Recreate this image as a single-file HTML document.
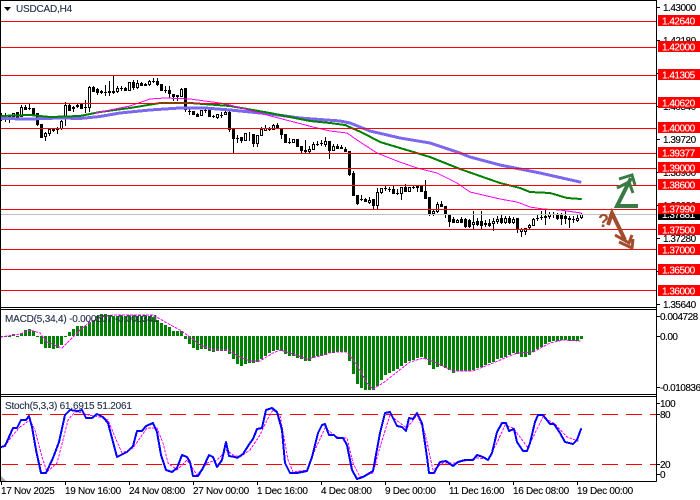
<!DOCTYPE html>
<html><head><meta charset="utf-8"><style>
html,body{margin:0;padding:0;background:#fff;width:700px;height:500px;overflow:hidden}
svg{display:block}
text{font-family:"Liberation Sans",sans-serif;font-size:10px;fill:#000;stroke:#000;stroke-width:.12px}
.a text,.a{letter-spacing:-.5px}
.t text{letter-spacing:-.3px}
.w text{fill:#fff;stroke:#fff;letter-spacing:-.5px}
.c{shape-rendering:crispEdges}
polyline{fill:none;stroke-linejoin:round;stroke-linecap:round}
</style></head><body>
<svg width="700" height="500" viewBox="0 0 700 500" xmlns="http://www.w3.org/2000/svg">
<rect width="700" height="500" fill="#fff"/>

<!-- candles -->
<path class="c" stroke="#000" stroke-width="1" fill="none" d="M1.5 113V121M5.5 113V122M9.5 115V123M13.5 113V118M17.5 112V118M21.5 105V117M25.5 105V110M29.5 104V110M33.5 108V115M37.5 113V126M41.5 124V138M45.5 132V141M49.5 129V136M53.5 129V132M57.5 127V134M61.5 120V130M65.5 102V126M69.5 104V111M73.5 106V112M77.5 104V108M81.5 104V109M85.5 100V113M89.5 86V112M93.5 86V92M97.5 88V95M101.5 90V94M105.5 85V96M109.5 81V96M113.5 76V94M117.5 86V93M121.5 86V91M125.5 87V91M129.5 82V91M133.5 80V90M137.5 80V89M141.5 82V86M145.5 83V86M149.5 80V86M153.5 78V83M157.5 78V86M161.5 84V91M165.5 86V93M169.5 86V98M173.5 94V101M177.5 95V101M181.5 88V97M185.5 88V112M189.5 108V115M193.5 111V115M197.5 113V117M201.5 110V116M205.5 107V113M209.5 110V117M213.5 115V118M217.5 114V119M221.5 112V118M225.5 111V115M229.5 111V132M233.5 129V153M237.5 135V143M241.5 137V143M245.5 133V141M249.5 132V141M253.5 134V147M257.5 135V147M261.5 127V136M265.5 125V131M269.5 127V131M273.5 124V130M277.5 123V129M281.5 129V139M285.5 134V143M289.5 138V144M293.5 139V143M297.5 139V147M301.5 146V153M305.5 140V153M309.5 146V153M313.5 142V150M317.5 141V146M321.5 140V146M325.5 137V147M329.5 141V159M333.5 144V151M337.5 144V149M341.5 145V149M345.5 147V152M349.5 151V176M353.5 171V196M357.5 195V205M361.5 195V201M365.5 198V202M369.5 197V204M373.5 199V209M377.5 188V209M381.5 188V194M385.5 186V191M389.5 187V192M393.5 186V194M397.5 189V195M401.5 187V200M405.5 184V192M409.5 187V192M413.5 185V189M417.5 186V192M421.5 185V192M425.5 180V199M429.5 197V216M433.5 210V216M437.5 202V213M441.5 201V207M445.5 206V218M449.5 214V227M453.5 217V223M457.5 219V223M461.5 217V223M465.5 218V228M469.5 219V228M473.5 211V229M477.5 218V226M481.5 211V229M485.5 220V227M489.5 219V227M493.5 218V231M497.5 216V224M501.5 214V224M505.5 216V224M509.5 216V224M513.5 217V224M517.5 218V233M521.5 228V237M525.5 228V235M529.5 224V230M533.5 218V226M537.5 215V221M541.5 211V220M545.5 210V225M549.5 212V219M553.5 212V218M557.5 213V220M561.5 213V225M565.5 211V224M569.5 216V228M573.5 216V223M577.5 215V222M581.5 213V219"/>
<path class="c" stroke="#000" stroke-width="3" fill="none" d="M1.5 115V116M5.5 116V117M9.5 116V117M17.5 112V118M25.5 107V110M29.5 108V109M33.5 108V115M37.5 113V125M41.5 124V138M53.5 129V131M57.5 129V130M69.5 105V111M81.5 104V109M85.5 107V108M93.5 87V92M97.5 89V93M101.5 91V93M105.5 92V93M109.5 91V93M113.5 91V93M121.5 88V89M125.5 88V91M133.5 82V88M141.5 83V86M145.5 84V86M153.5 81V82M157.5 81V85M161.5 84V91M165.5 90V91M169.5 90V94M173.5 94V97M185.5 88V110M189.5 111V112M193.5 111V115M197.5 114V117M205.5 110V111M209.5 110V117M213.5 116V117M221.5 115V116M229.5 112V130M233.5 129V139M237.5 138V139M241.5 137V141M253.5 134V144M269.5 129V130M277.5 125V129M281.5 129V135M285.5 134V143M289.5 142V143M297.5 139V147M301.5 146V151M305.5 150V152M317.5 144V145M321.5 143V144M329.5 141V151M337.5 146V149M341.5 147V149M345.5 149V152M349.5 151V175M353.5 173V196M357.5 195V204M361.5 199V200M365.5 199V202M373.5 199V206M385.5 188V189M389.5 189V190M393.5 189V194M397.5 193V194M405.5 187V192M413.5 187V188M417.5 186V188M421.5 186V192M425.5 191V199M429.5 197V214M441.5 204V207M445.5 206V215M449.5 214V222M453.5 219V223M461.5 219V223M465.5 219V227M469.5 220V227M477.5 221V225M481.5 221V226M489.5 223V226M501.5 218V223M509.5 218V223M517.5 218V229M537.5 218V219M541.5 217V218M553.5 214V215M557.5 214V219M561.5 215V219M565.5 216V219M569.5 218V220M573.5 219V220"/>
<path class="c" stroke="#000" stroke-width="1" fill="#fff" d="M12.5 113.500h2V116.500h-2zM20.500 107.500h2V116.500h-2zM44.500 133.500h2V136.500h-2zM48.500 129.500h2V133.500h-2zM60.500 121.500h2V128.500h-2zM64.500 105.500h2V116.500h-2zM72.500 107.500h2V108.500h-2zM76.500 105.500h2V106.500h-2zM88.500 87.500h2V107.500h-2zM116.500 88.500h2V91.500h-2zM128.500 82.500h2V90.500h-2zM136.500 83.500h2V87.500h-2zM148.500 81.500h2V84.500h-2zM176.500 95.500h2V96.500h-2zM180.500 89.500h2V96.500h-2zM200.500 110.500h2V115.500h-2zM216.500 114.500h2V117.500h-2zM224.500 112.500h2V114.500h-2zM244.500 133.500h2V140.500h-2zM256.500 135.500h2V143.500h-2zM260.500 129.500h2V135.500h-2zM264.500 128.500h2V130.500h-2zM272.500 125.500h2V129.500h-2zM292.500 139.500h2V142.500h-2zM308.500 149.500h2V151.500h-2zM312.500 144.500h2V149.500h-2zM324.500 141.500h2V144.500h-2zM332.500 146.500h2V150.500h-2zM368.500 200.500h2V202.500h-2zM376.500 192.500h2V205.500h-2zM380.500 188.500h2V192.500h-2zM400.500 187.500h2V193.500h-2zM408.500 187.500h2V191.500h-2zM432.500 211.500h2V213.500h-2zM436.500 204.500h2V211.500h-2zM456.500 220.500h2V222.500h-2zM472.500 222.500h2V224.500h-2zM484.500 223.500h2V224.500h-2zM492.500 221.500h2V223.500h-2zM496.500 219.500h2V221.500h-2zM504.500 218.500h2V222.500h-2zM512.500 219.500h2V222.500h-2zM520.500 229.500h2V231.500h-2zM524.500 228.500h2V231.500h-2zM528.500 225.500h2V227.500h-2zM532.500 219.500h2V225.500h-2zM544.500 216.500h2V217.500h-2zM548.500 214.500h2V216.500h-2zM576.500 218.500h2V220.500h-2zM580.500 214.500h2V217.500h-2z"/>

<!-- moving averages -->
<polyline class="c" points="0,118.500 30,119 60,118 80,118.500 100,116.500 120,113 150,110 180,108 205,108 230,110 270,114 300,118 340,121 350,123 370,131 400,138 430,143 460,153 470,157 500,165 540,173 580,182" stroke="#7b68ee" stroke-width="3" stroke-linecap="butt"/>
<polyline class="c" points="0,116 30,115 50,117 80,116 100,112 130,108 160,103 190,103 230,106 270,113 290,117 310,121 330,123 345,125 363,133 380,142 400,148 430,157 450,165 460,169 480,176 500,183 520,188 530,192 550,193 567,198 581,199" stroke="#008000" stroke-width="2" stroke-linecap="butt"/>
<polyline class="c" points="95,113 110,110 130,106 150,99 165,98 190,99 220,103 230,105 263,114 290,121 313,127 330,131 347,133 357,140 377,153 397,161 417,168 437,173 457,183 470,192 500,199 517,202 530,207 543,209 560,210 581,213" stroke="#ff00ff" stroke-width="1"/>

<!-- horizontal lines -->
<path class="c" stroke="#ff0000" stroke-width="1" fill="none" d="M1 21.500H656M1 47.500H656M1 75.500H656M1 103.500H656M1 128.500H656M1 153.500H656M1 168.500H656M1 185.500H656M1 209.500H656M1 229.500H656M1 249.500H656M1 269.500H656M1 290.500H656"/>
<path class="c" stroke="#c0c0c0" stroke-width="1" d="M0 214.500H656"/>
<!-- arrows -->
<path d="M638 206H617L631 178" fill="none" stroke="#3a7a44" stroke-width="4" stroke-linejoin="miter"/>
<path d="M617 188L629 182L633 193M619 179L632 175L635 185" fill="none" stroke="#3a7a44" stroke-width="3"/>
<path d="M608 225L612 213L625 240" fill="none" stroke="#a24b2d" stroke-width="4"/>
<path d="M615 235L629 243L632 235M619 242L632 248L633 239" fill="none" stroke="#a24b2d" stroke-width="3"/>
<text x="598" y="227" style="font-size:18px;font-weight:bold;fill:#a24b2d;stroke:none">?</text>

<!-- MACD histogram -->
<path class="c" stroke="#008000" stroke-width="3" fill="none" d="M1.500 336V337M5.500 336V337M9.500 336V337M13.500 334V336M17.500 336V337M21.500 333V336M25.500 330V336M29.500 329V336M33.500 331V336M37.500 336V337M41.500 336V344M45.500 336V348M49.500 336V348M53.500 336V349M57.500 336V348M61.500 336V345M65.500 336V337M69.500 332V336M73.500 329V336M77.500 326V336M81.500 326V336M85.500 326V336M89.500 322V336M93.500 320V336M97.500 316V336M101.500 314V336M105.500 314V336M109.500 316V336M113.500 316V336M117.500 316V336M121.500 316V336M125.500 316V336M129.500 316V336M133.500 316V336M137.500 316V336M141.500 316V336M145.500 316V336M149.500 316V336M153.500 317V336M157.500 320V336M161.500 323V336M165.500 325V336M169.500 327V336M173.500 331V336M177.500 331V336M181.500 331V336M185.500 336V339M189.500 336V344M193.500 336V348M197.500 336V350M201.500 336V349M205.500 336V349M209.500 336V351M213.500 336V352M217.500 336V351M221.500 336V351M225.500 336V351M229.500 336V354M233.500 336V359M237.500 336V364M241.500 336V366M245.500 336V364M249.500 336V363M253.500 336V363M257.500 336V362M261.500 336V359M265.500 336V356M269.500 336V353M273.500 336V351M277.500 336V350M281.500 336V351M285.500 336V354M289.500 336V356M293.500 336V356M297.500 336V358M301.500 336V359M305.500 336V361M309.500 336V361M313.500 336V358M317.500 336V356M321.500 336V356M325.500 336V355M329.500 336V353M333.500 336V353M337.500 336V352M341.500 336V352M345.500 336V352M349.500 336V361M353.500 336V374M357.500 336V384M361.500 336V388M365.500 336V390M369.500 336V390M373.500 336V390M377.500 336V386M381.500 336V380M385.500 336V375M389.500 336V373M393.500 336V371M397.500 336V369M401.500 336V366M405.500 336V363M409.500 336V361M413.500 336V360M417.500 336V358M421.500 336V357M425.500 336V359M429.500 336V365M433.500 336V369M437.500 336V367M441.500 336V366M445.500 336V368M449.500 336V370M453.500 336V373M457.500 336V371M461.500 336V371M465.500 336V371M469.500 336V371M473.500 336V370M477.500 336V368M481.500 336V367M485.500 336V365M489.500 336V363M493.500 336V362M497.500 336V359M501.500 336V358M505.500 336V357M509.500 336V355M513.500 336V353M517.500 336V354M521.500 336V357M525.500 336V357M529.500 336V355M533.500 336V352M537.500 336V349M541.500 336V347M545.500 336V344M549.500 336V342M553.500 336V341M557.500 336V341M561.500 336V340M565.500 336V340M569.500 336V341M573.500 336V341M577.500 336V341M581.500 336V339"/>
<g class="c" stroke="#ff00ff" fill="none" stroke-dasharray="2 2">
<polyline class="c" stroke-width="1" stroke-linecap="butt" points="1,337 20,334 30,330 40,333 47,342 62,348 68,342 80,330 90,322 100,317 113,315 153,315 167,323 180,330 190,337 200,345 213,350 227,350 240,357 250,361 260,361 273,353 280,350 290,353 307,359 320,356 333,352 347,352 357,365 367,383 373,389 383,383 397,372 410,362 423,358 437,363 453,371 470,371 473,371 493,363 517,353 533,352 550,343 563,340 580,341"/>
</g>

<!-- Stoch -->
<path stroke="#ff0000" stroke-width="1" fill="none" stroke-dasharray="16 8" class="c" d="M2 414.500H656M2 464.500H656"/>
<g stroke="#ff00ff" fill="none" stroke-dasharray="2 2" stroke-width="1">
<polyline class="c" stroke-linecap="butt" points="1,448 7,443 13,435 20,427 30,420 35,430 42,457 47,472 57,463 63,440 68,420 75,412 83,413 88,415 100,417 108,420 115,437 122,453 133,448 140,438 147,428 157,428 163,443 168,463 177,470 187,460 197,475 207,463 217,460 227,450 233,455 240,457 250,450 260,435 267,420 273,410 280,415 288,460 293,472 307,470 315,450 325,428 337,437 347,438 353,463 360,477 373,473 380,447 390,415 400,423 407,428 417,415 425,433 433,470 443,463 457,463 460,462 477,458 488,459 497,443 505,425 513,428 520,437 528,448 535,433 543,417 555,424 567,437 578,441"/>
</g>
<polyline class="c" stroke="#0000ff" stroke-width="2" points="1,447 5,446 13,428 17,428 21,420 26,420 29,416 32,427 36,450 41,473 46,473 53,458 59,442 65,415 70,410 78,411 82,410 86,418 92,418 97,414 103,417 108,423 117,457 127,452 133,446 137,431 142,431 146,426 153,423 157,432 161,455 166,470 172,472 177,468 182,455 187,457 190,462 193,476 198,476 203,468 209,455 213,457 217,467 222,460 226,442 229,456 235,457 237,458 243,454 250,443 253,439 257,429 262,428 266,410 272,408 277,412 282,430 285,463 290,473 297,473 307,471 312,457 318,433 322,425 325,424 329,435 334,435 337,438 343,438 347,445 352,470 357,479 363,477 373,471 380,433 385,413 390,412 397,426 402,427 406,431 409,418 413,419 417,413 422,423 427,457 429,473 434,473 440,462 446,461 453,466 458,462 465,460 473,460 477,455 483,457 488,460 492,453 497,432 502,423 506,423 509,431 514,429 517,442 523,451 527,451 530,443 535,422 538,415 543,415 550,424 554,424 560,433 565,442 573,444 577,440 581,429"/>

<!-- frames -->
<path class="c" stroke="#000" stroke-width="1" fill="none" d="M0.500 0V481M0 0.500H656.500M656.500 0V481.500M0 307.500H656.500M0 309.500H656.500M0 394.500H656.500M0 396.500H656.500M0 481.500H656.500"/>
<path d="M1 476L6 481H1z" fill="#aaa"/>
<path d="M4 7h7l-3.500 4z" fill="#000"/>

<!-- axis ticks -->
<path class="c" stroke="#000" stroke-width="1" fill="none" d="M657 7.500h3M657 40.500h3M657 73.500h3M657 106.500h3M657 139.500h3M657 172.500h3M657 205.500h3M657 238.500h3M657 271.500h3M657 304.500h3M657 316.500h3M657 336.500h3M657 387.500h3M657 403.500h3M657 414.500h3M657 464.500h3M657 474.500h3M1.500 481V485M65.500 481V485M129.500 481V485M193.500 481V485M257.500 481V485M321.500 481V485M385.500 481V485M449.500 481V485M513.500 481V485M577.500 481V485"/>

<!-- axis labels -->
<g class="a">
<text x="663" y="11">1.43000</text>
<text x="663" y="44">1.42180</text>
<text x="663" y="77">1.41360</text>
<text x="663" y="110">1.40540</text>
<text x="663" y="143">1.39720</text>
<text x="663" y="176">1.38900</text>
<text x="663" y="209">1.38080</text>
<text x="663" y="242">1.37280</text>
<text x="663" y="275">1.36460</text>
<text x="663" y="308">1.35640</text>
<text x="660" y="320">0.004728</text>
<text x="660" y="340">0.00</text>
<text x="660" y="391">-0.010836</text>
<text x="660" y="407">100</text>
<text x="660" y="418">80</text>
<text x="660" y="468">20</text>
<text x="660" y="478">0</text>
</g>
<g class="w">
<rect class="c" x="658" y="209" width="42" height="11" fill="#000"/><text x="662" y="218">1.37881</text>
<rect class="c" x="658" y="15" width="42" height="11" fill="#f00"/><text x="662" y="24.500">1.42640</text>
<rect class="c" x="658" y="41" width="42" height="11" fill="#f00"/><text x="662" y="50.500">1.42000</text>
<rect class="c" x="658" y="69" width="42" height="11" fill="#f00"/><text x="662" y="78.500">1.41305</text>
<rect class="c" x="658" y="97" width="42" height="11" fill="#f00"/><text x="662" y="106.500">1.40620</text>
<rect class="c" x="658" y="122" width="42" height="11" fill="#f00"/><text x="662" y="131.500">1.40000</text>
<rect class="c" x="658" y="147" width="42" height="11" fill="#f00"/><text x="662" y="156.500">1.39377</text>
<rect class="c" x="658" y="162" width="42" height="11" fill="#f00"/><text x="662" y="171.500">1.39000</text>
<rect class="c" x="658" y="179" width="42" height="11" fill="#f00"/><text x="662" y="188.500">1.38600</text>
<rect class="c" x="658" y="203" width="42" height="11" fill="#f00"/><text x="662" y="212.500">1.37990</text>
<rect class="c" x="658" y="224" width="42" height="11" fill="#f00"/><text x="662" y="233.500">1.37500</text>
<rect class="c" x="658" y="244" width="42" height="11" fill="#f00"/><text x="662" y="253.500">1.37000</text>
<rect class="c" x="658" y="264" width="42" height="11" fill="#f00"/><text x="662" y="273.500">1.36500</text>
<rect class="c" x="658" y="285" width="42" height="11" fill="#f00"/><text x="662" y="294.500">1.36000</text>
</g>

<!-- titles -->
<text x="16" y="12" style="fill:#23304a;stroke:#23304a;letter-spacing:-.2px">USDCAD,H4</text>
<text x="5" y="322" style="fill:#23304a;stroke:#23304a;letter-spacing:-.2px">MACD(5,34,4) -0.000507 -0.000341</text>
<text x="5" y="409" style="fill:#23304a;stroke:#23304a;letter-spacing:-.2px">Stoch(5,3,3) 61.6915 51.2061</text>

<!-- time axis -->
<g class="t">
<text x="1" y="494">17 Nov 2025</text>
<text x="65" y="494">19 Nov 16:00</text>
<text x="129" y="494">24 Nov 08:00</text>
<text x="193" y="494">27 Nov 00:00</text>
<text x="257" y="494">1 Dec 16:00</text>
<text x="321" y="494">4 Dec 08:00</text>
<text x="385" y="494">9 Dec 00:00</text>
<text x="449" y="494">11 Dec 16:00</text>
<text x="513" y="494">16 Dec 08:00</text>
<text x="577" y="494">19 Dec 00:00</text>
</g>
</svg>
</body></html>
